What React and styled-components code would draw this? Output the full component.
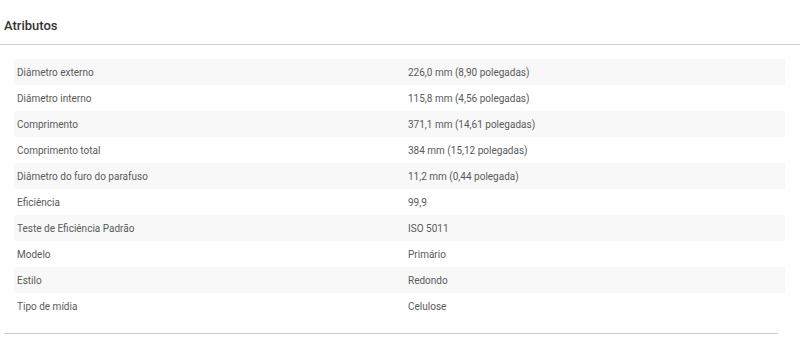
import styled, { createGlobalStyle } from 'styled-components';

const GlobalStyle = createGlobalStyle`
    body {
        margin: 0;
        background: #ffffff;
        font-family: Roboto, "Liberation Sans", Arial, sans-serif;
    }
`

const Section = styled.section`
    width: 800px;
    height: 341px;
    display: flex;
    flex-direction: column;
    background: #ffffff;
`

const Header = styled.div`
    height: 44px;
    display: flex;
    align-items: center;
    padding-left: 4px;
    border-bottom: 1px solid #cfcfcf;
`

const Title = styled.h2`
    margin: 0;
    padding-top: 6px;
    font-size: 13px;
    font-weight: 500;
    color: #333333;
`

const Table = styled.div`
    margin: 14px 0 0 14px;
    width: 771px;
    display: flex;
    flex-direction: column;
`

const Row = styled.div`
    height: 26px;
    display: grid;
    grid-template-columns: 394px 1fr;
    align-items: center;
    background: ${props => props.$striped ? '#f8f8f8' : '#ffffff'};
    font-size: 10px;
    color: #5a5a5a;
`

const Label = styled.span`
    padding-left: 3px;
`

const Value = styled.span``

const Footer = styled.div`
    margin: 14px 0 0 4px;
    width: 774px;
    border-top: 1px solid #cfcfcf;
`

const attributes = [
    ['Diâmetro externo', '226,0 mm (8,90 polegadas)'],
    ['Diâmetro interno', '115,8 mm (4,56 polegadas)'],
    ['Comprimento', '371,1 mm (14,61 polegadas)'],
    ['Comprimento total', '384 mm (15,12 polegadas)'],
    ['Diâmetro do furo do parafuso', '11,2 mm (0,44 polegada)'],
    ['Eficiência', '99,9'],
    ['Teste de Eficiência Padrão', 'ISO 5011'],
    ['Modelo', 'Primário'],
    ['Estilo', 'Redondo'],
    ['Tipo de mídia', 'Celulose'],
];

function App() {
    return (
        <>
            <GlobalStyle />
            <Section>
                <Header>
                    <Title>Atributos</Title>
                </Header>
                <Table>
                    {attributes.map(([label, value], i) => (
                        <Row key={label} $striped={i % 2 === 0}>
                            <Label>{label}</Label>
                            <Value>{value}</Value>
                        </Row>
                    ))}
                </Table>
                <Footer />
            </Section>
        </>
    );
}

export default App;
